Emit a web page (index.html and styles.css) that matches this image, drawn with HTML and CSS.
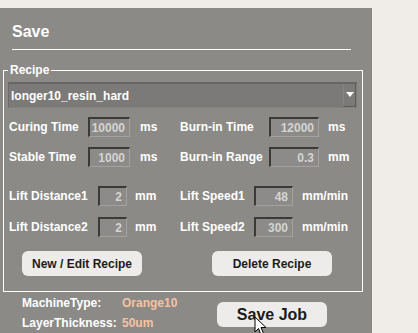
FILE: index.html
```html
<!DOCTYPE html>
<html lang="en">
<head>
  <meta charset="UTF-8" />
  <meta name="viewport" content="width=device-width, initial-scale=1.0"/>
  <title>Save Job</title>
  <link rel="stylesheet" href="styles.css">
</head>
<body>
  <div class="panel">
    <h1 class="title">Save</h1>
    <div class="rule"></div>

    <fieldset class="recipe">
      <legend>Recipe</legend>
      <div class="combo">
        <span class="combo-text">longer10_resin_hard</span>
        <span class="combo-arrow"></span>
      </div>

      <div class="row row-time">
        <label>Curing Time</label>
        <input type="text" value="10000" readonly>
        <span class="unit">ms</span>
        <label>Burn-in Time</label>
        <input type="text" value="12000" readonly>
        <span class="unit">ms</span>
      </div>
      <div class="row row-time">
        <label>Stable Time</label>
        <input type="text" value="1000" readonly>
        <span class="unit">ms</span>
        <label>Burn-in Range</label>
        <input type="text" value="0.3" readonly>
        <span class="unit">mm</span>
      </div>

      <div class="row row-lift spaced">
        <label>Lift Distance1</label>
        <input type="text" value="2" readonly>
        <span class="unit">mm</span>
        <label>Lift Speed1</label>
        <input type="text" value="48" readonly>
        <span class="unit">mm/min</span>
      </div>
      <div class="row row-lift">
        <label>Lift Distance2</label>
        <input type="text" value="2" readonly>
        <span class="unit">mm</span>
        <label>Lift Speed2</label>
        <input type="text" value="300" readonly>
        <span class="unit">mm/min</span>
      </div>

      <div class="actions">
        <button class="btn btn-edit">New / Edit Recipe</button>
        <button class="btn btn-delete">Delete Recipe</button>
      </div>
    </fieldset>

    <div class="footer">
      <div class="info">
        <span class="info-label">MachineType:</span>
        <span class="info-value">Orange10</span>
        <span class="info-label">LayerThickness:</span>
        <span class="info-value">50um</span>
      </div>
      <button class="btn btn-save">Save Job</button>
    </div>

    <svg class="cursor" width="13" height="20" viewBox="0 0 13 20">
      <path d="M1 1 L1 16 L4.5 12.5 L7 18.5 L9.5 17.5 L7 11.5 L12 11.5 Z" fill="#fff" stroke="#000" stroke-width="1" stroke-linejoin="miter"/>
    </svg>
  </div>
</body>
</html>
```

FILE: styles.css
```css
html, body {
  margin: 0;
  padding: 0;
}
body {
  background: #f0ede9;
  font-family: "Liberation Sans", Arial, sans-serif;
  font-size: 12px;
  font-weight: bold;
  color: #fff;
  padding-top: 8px;
}
.panel {
  position: relative;
  width: 372px;
  height: 325px;
  box-sizing: border-box;
  background: #8b8a87;
  padding: 14px 0 0 3px;
}
.title {
  margin: 0 0 0 9px;
  font-size: 16px;
  line-height: 20px;
  font-weight: bold;
}
.rule {
  margin: 7px 0 0 9px;
  width: 339px;
  height: 1px;
  background: #fff;
}
.recipe {
  margin: 13px 0 0 0;
  width: 360px;
  box-sizing: border-box;
  border: 1px solid #fff;
  padding: 5px 4px 15px 4px;
}
.recipe legend {
  padding: 0 2px;
  margin-left: 0;
  line-height: 14px;
}
.combo {
  display: flex;
  align-items: center;
  height: 26px;
  width: 349px;
  box-sizing: border-box;
  background: #7b7a78;
  border-top: 2px solid #676664;
  border-left: 1px solid #6c6b69;
  border-bottom: 1px solid #828180;
  padding-left: 2px;
}
.combo-text {
  flex: 1;
}
.combo-arrow {
  width: 13px;
  height: 23px;
  box-sizing: border-box;
  border-right: 1px solid #5e5d5b;
  border-bottom: 1px solid #5e5d5b;
  border-left: 1px solid #858482;
  margin-right: 1px;
  margin-top: -1px;
  display: flex;
  align-items: center;
  justify-content: center;
}
.combo-arrow::after {
  content: "";
  border-left: 4px solid transparent;
  border-right: 4px solid transparent;
  border-top: 5px solid #fff;
}
.row {
  display: flex;
  align-items: center;
  height: 20px;
  padding-left: 1px;
}
.row-time {
  margin-top: 9px;
}
.row-time + .row-time {
  margin-top: 10px;
}
.row.spaced {
  margin-top: 19px;
}
.row-lift + .row-lift {
  margin-top: 11px;
}
.row input {
  height: 20px;
  box-sizing: border-box;
  margin: 0;
  padding: 0 4px 0 0;
  background: #8c8b89;
  border-top: 2px solid #3a3a39;
  border-left: 2px solid #3a3a39;
  border-right: 1px solid #a3a2a0;
  border-bottom: 1px solid #a3a2a0;
  font-family: inherit;
  font-size: 12px;
  font-weight: bold;
  color: #d4d4d2;
  text-align: right;
  outline: none;
}
.row-time label:nth-of-type(1) { width: 79px; }
.row-time input:nth-of-type(1) { width: 42px; }
.row-time .unit:nth-of-type(1) { margin-left: 10px; width: 40px; }
.row-time label:nth-of-type(2) { width: 89px; }
.row-time input:nth-of-type(2) { width: 50px; }
.row-time .unit:nth-of-type(2) { margin-left: 9px; }

.row-lift label:nth-of-type(1) { width: 89px; }
.row-lift input:nth-of-type(1) { width: 29px; }
.row-lift .unit:nth-of-type(1) { margin-left: 8px; width: 45px; }
.row-lift label:nth-of-type(2) { width: 74px; }
.row-lift input:nth-of-type(2) { width: 39px; }
.row-lift .unit:nth-of-type(2) { margin-left: 9px; }

.actions {
  display: flex;
  margin-top: 14px;
  padding-left: 14px;
}
.btn {
  height: 25px;
  border: none;
  border-radius: 6px;
  background: #edecea;
  color: #1c1c1c;
  font-family: inherit;
  font-size: 12px;
  font-weight: bold;
  padding: 0;
}
.btn-edit {
  width: 120px;
}
.btn-delete {
  width: 120px;
  margin-left: 70px;
}
.footer {
  display: flex;
  align-items: flex-start;
}
.info {
  display: grid;
  grid-template-columns: 100px auto;
  grid-auto-rows: 20px;
  align-items: center;
  width: 214px;
  box-sizing: border-box;
  padding: 1px 0 0 19px;
}
.info-value {
  color: #f6c2a2;
}
.btn-save {
  width: 110px;
  margin-top: 10px;
  font-size: 16px;
}
.cursor {
  position: absolute;
  left: 254px;
  top: 308px;
}
```
